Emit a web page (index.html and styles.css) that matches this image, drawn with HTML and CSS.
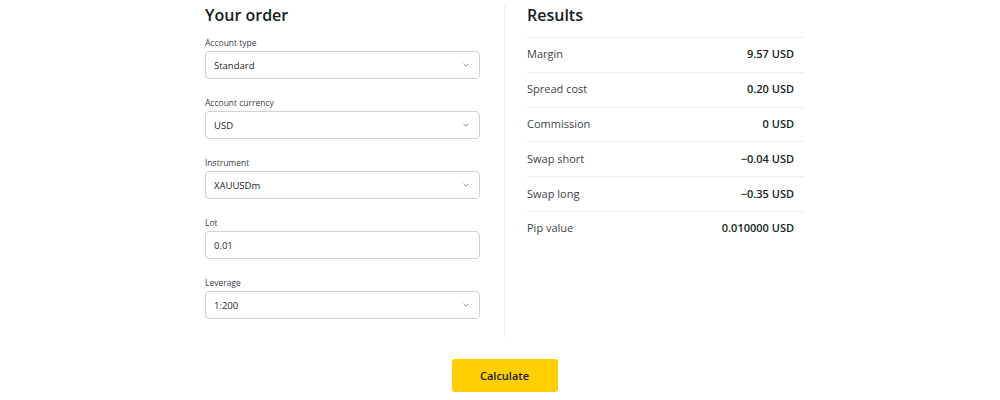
FILE: index.html
```html
<!DOCTYPE html>
<html lang="en">
<head>
<meta charset="utf-8">
<title>Calculator</title>
<link rel="stylesheet" href="styles.css">
</head>
<body>
<div class="calc">
  <div class="columns">
    <section class="order">
      <h2 class="title">Your order</h2>
      <div class="field">
        <label class="label">Account type</label>
        <div class="control select"><span>Standard</span><svg class="chev" viewBox="0 0 10 6"><path d="M1 1l4 4 4-4"/></svg></div>
      </div>
      <div class="field">
        <label class="label">Account currency</label>
        <div class="control select"><span>USD</span><svg class="chev" viewBox="0 0 10 6"><path d="M1 1l4 4 4-4"/></svg></div>
      </div>
      <div class="field">
        <label class="label">Instrument</label>
        <div class="control select"><span>XAUUSDm</span><svg class="chev" viewBox="0 0 10 6"><path d="M1 1l4 4 4-4"/></svg></div>
      </div>
      <div class="field">
        <label class="label">Lot</label>
        <div class="control"><span>0.01</span></div>
      </div>
      <div class="field">
        <label class="label">Leverage</label>
        <div class="control select"><span>1:200</span><svg class="chev" viewBox="0 0 10 6"><path d="M1 1l4 4 4-4"/></svg></div>
      </div>
    </section>
    <section class="results">
      <h2 class="title">Results</h2>
      <ul class="rows">
        <li class="row"><span>Margin</span><b>9.57 USD</b></li>
        <li class="row"><span>Spread cost</span><b>0.20 USD</b></li>
        <li class="row"><span>Commission</span><b>0 USD</b></li>
        <li class="row"><span>Swap short</span><b>−0.04 USD</b></li>
        <li class="row"><span>Swap long</span><b>−0.35 USD</b></li>
        <li class="row"><span>Pip value</span><b>0.010000 USD</b></li>
      </ul>
    </section>
  </div>
  <div class="actions">
    <button class="btn">Calculate</button>
  </div>
</div>
</body>
</html>
```
FILE: styles.css
```css
* { box-sizing: border-box; }
html, body { margin: 0; padding: 0; background: #fff; }
body {
  font-family: "Open Sans", "Noto Sans", sans-serif;
  color: #141d22;
}
.calc {
  width: 599px;
  margin: 0 0 0 205px;
}
.columns {
  display: flex;
  padding-top: 4px;
}
.order {
  width: 300px;
  padding-right: 24px;
  border-right: 1px solid #f0f0f0;
  padding-bottom: 2px;
}
.results {
  width: 299px;
  padding-left: 22px;
}
.title {
  margin: 0;
  font-size: 16px;
  font-weight: 600;
  line-height: 22px;
  height: 31px;
}
.results .title { height: 33px; }
.field { margin-bottom: 16px; }
.label {
  display: block;
  font-size: 8.5px;
  line-height: 16px;
  color: #3a4247;
}
.control {
  height: 28px;
  border: 1px solid #cfd2d4;
  border-radius: 4px;
  display: flex;
  align-items: center;
  justify-content: space-between;
  padding: 0 10px 0 8px;
  font-size: 9.5px;
  color: #1d252b;
}
.chev {
  width: 6px;
  height: 4px;
  fill: none;
  stroke: #6a7378;
  stroke-width: 1.4;
}
.rows { list-style: none; margin: 0; padding: 0; }
.row {
  display: flex;
  justify-content: space-between;
  align-items: center;
  height: 34.8px;
  padding: 0 10px 2px 0;
  border-top: 1px solid #eeeeee;
  font-size: 11px;
  color: #3b4348;
}
.row b { font-weight: 600; color: #141d22; }
.actions {
  display: flex;
  justify-content: center;
  padding-top: 22px;
}
.btn {
  width: 106px;
  height: 33px;
  background: #ffcf01;
  border: none;
  border-radius: 3px;
  font-family: inherit;
  font-size: 11px;
  font-weight: 600;
  color: #141d22;
}
```
